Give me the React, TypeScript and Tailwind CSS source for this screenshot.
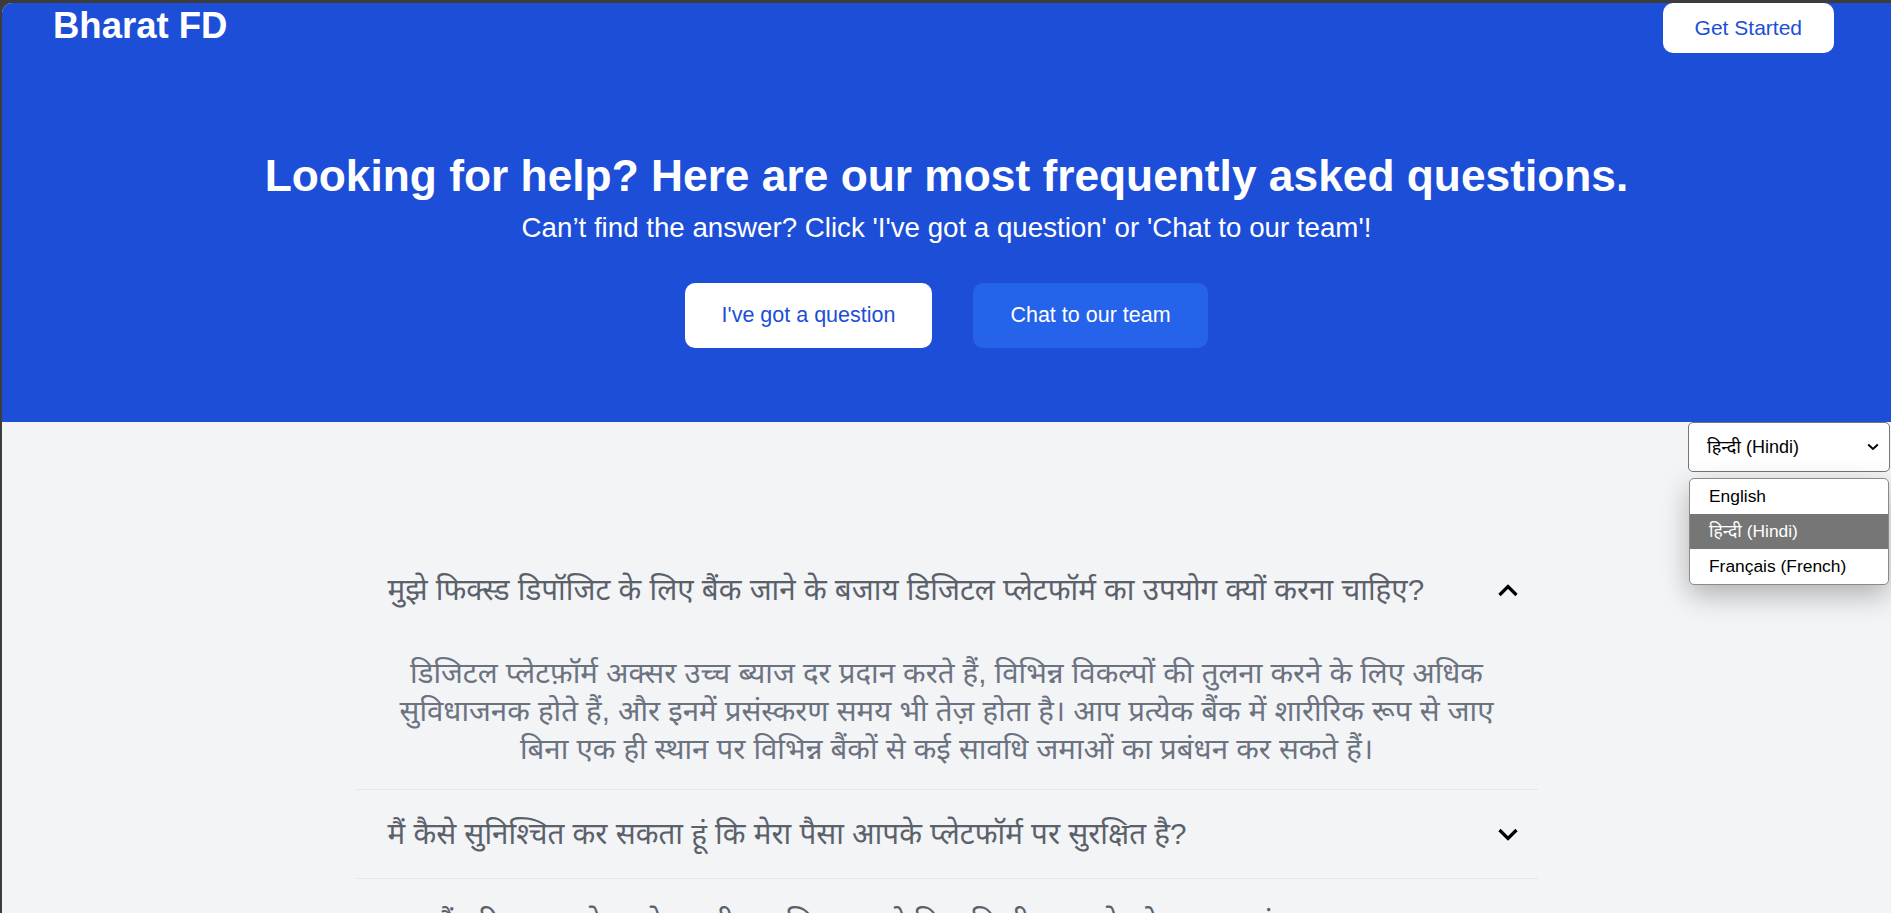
import { useState } from "react";

const faqs = [
    {
        q: "मुझे फिक्स्ड डिपॉजिट के लिए बैंक जाने के बजाय डिजिटल प्लेटफॉर्म का उपयोग क्यों करना चाहिए?",
        a: [
            "डिजिटल प्लेटफ़ॉर्म अक्सर उच्च ब्याज दर प्रदान करते हैं, विभिन्न विकल्पों की तुलना करने के लिए अधिक",
            "सुविधाजनक होते हैं, और इनमें प्रसंस्करण समय भी तेज़ होता है। आप प्रत्येक बैंक में शारीरिक रूप से जाए",
            "बिना एक ही स्थान पर विभिन्न बैंकों से कई सावधि जमाओं का प्रबंधन कर सकते हैं।",
        ],
    },
    {
        q: "मैं कैसे सुनिश्चित कर सकता हूं कि मेरा पैसा आपके प्लेटफॉर्म पर सुरक्षित है?",
        a: [],
    },
    {
        q: "क्या मैं परिपक्वता से पहले अपनी सावधि जमा को बिना किसी शुल्क के तोड़ सकता हूं?",
        a: [],
    },
];

const Chevron = ({ up = false }: { up?: boolean }) => (
    <svg width="22" height="13" viewBox="0 0 22 13" fill="none" className="overflow-visible shrink-0">
        <path
            d={up ? "M2.5 11 L11 2.5 L19.5 11" : "M2.5 2 L11 10.5 L19.5 2"}
            stroke="#000"
            strokeWidth="3.2"
            strokeLinejoin="miter"
        />
    </svg>
);

export default function App() {
    const [open, setOpen] = useState(0);

    return (
        <div className="min-h-screen bg-[#3c3c3c] pt-[3px] pl-[2px]">
            <div className="rounded-tl-[10px] overflow-hidden bg-[#f3f4f6] min-h-[910px] font-['Liberation_Sans','Noto_Sans','Noto_Sans_Devanagari',sans-serif]">

                {/* Hero */}
                <header className="bg-[#1d4ed8] h-[419px] flex flex-col">
                    <nav className="flex justify-between items-start pl-[51px] pr-[57px]">
                        <h1 className="mt-[3px] text-[36.5px] leading-10 font-bold text-white">Bharat FD</h1>
                        <button className="h-[50px] px-8 rounded-[10px] bg-white text-[#1d4ed8] text-[21px]">
                            Get Started
                        </button>
                    </nav>

                    <div className="flex flex-col items-center mt-[97px] text-white">
                        <h2 className="text-[44.3px] leading-[52px] font-bold">
                            Looking for help? Here are our most frequently asked questions.
                        </h2>
                        <p className="mt-2 text-[27.7px] leading-9">
                            Can’t find the answer? Click 'I've got a question' or 'Chat to our team'!
                        </p>
                        <div className="flex gap-[41px] mt-[37px]">
                            <button className="h-[65px] w-[247px] rounded-[10px] bg-white text-[#1d4ed8] text-[21.5px]">
                                I've got a question
                            </button>
                            <button className="h-[65px] w-[235px] rounded-[10px] bg-[#2563eb] text-white text-[21.5px]">
                                Chat to our team
                            </button>
                        </div>
                    </div>
                </header>

                {/* Language picker */}
                <div className="relative flex justify-end pr-px">
                    <div className="w-[202px] h-[50px] rounded-[5px] border border-[#767676] bg-white flex items-center justify-between pl-[18px] pr-[10px] text-black text-[18px]">
                        <span>हिन्दी (Hindi)</span>
                        <svg width="12" height="8" viewBox="0 0 12 8" fill="none">
                            <path d="M1.2 1.5 L6 6 L10.8 1.5" stroke="#000" strokeWidth="1.9" />
                        </svg>
                    </div>
                    <ul className="absolute top-[56px] right-[2px] w-[200px] rounded-[5px] border border-[#8a8a8a] bg-white overflow-hidden shadow-[0_10px_28px_rgba(0,0,0,0.28)] text-[17.4px] text-black z-10">
                        <li className="h-[35px] flex items-center pl-[19px]">English</li>
                        <li className="h-[35px] flex items-center pl-[19px] bg-[#767676] text-white">हिन्दी (Hindi)</li>
                        <li className="h-[35px] flex items-center pl-[19px]">Français (French)</li>
                    </ul>
                </div>

                {/* FAQ list */}
                <div className="max-w-[1182px] mx-auto mt-[74px]">
                    {faqs.map((f, i) => (
                        <div key={i} className="border-b border-[#e5e7eb]">
                            <button
                                onClick={() => setOpen(open === i ? -1 : i)}
                                className="w-full h-[88px] flex items-center justify-between pl-8 pr-[19px] text-left"
                            >
                                <span className="text-[29.6px] leading-9 text-[#5b616b]">{f.q}</span>
                                <Chevron up={open === i} />
                            </button>
                            {open === i && f.a.length > 0 && (
                                <p className="pt-5 pb-[21px] px-4 text-center text-[29.4px] leading-[38px] text-[#6b7280]">
                                    {f.a.map((line, j) => (
                                        <span key={j}>
                                            {line}
                                            {j < f.a.length - 1 && <br />}
                                        </span>
                                    ))}
                                </p>
                            )}
                        </div>
                    ))}
                </div>
            </div>
        </div>
    );
}
